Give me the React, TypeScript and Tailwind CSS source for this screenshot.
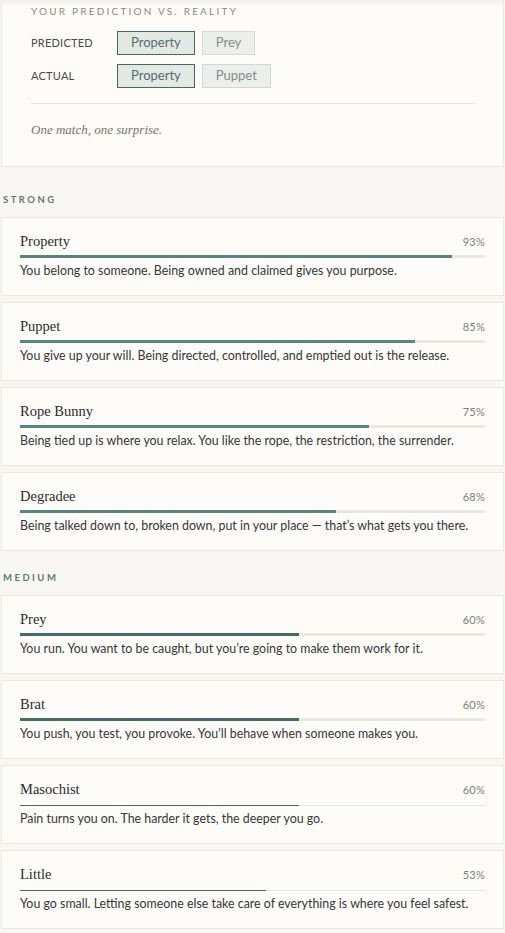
import React from 'react';

interface Result {
  name: string;
  pct: number;
  text: string;
}

const strong: Result[] = [
  { name: 'Property', pct: 93, text: 'You belong to someone. Being owned and claimed gives you purpose.' },
  { name: 'Puppet', pct: 85, text: 'You give up your will. Being directed, controlled, and emptied out is the release.' },
  { name: 'Rope Bunny', pct: 75, text: 'Being tied up is where you relax. You like the rope, the restriction, the surrender.' },
  { name: 'Degradee', pct: 68, text: 'Being talked down to, broken down, put in your place — that’s what gets you there.' },
];

const medium: Result[] = [
  { name: 'Prey', pct: 60, text: 'You run. You want to be caught, but you’re going to make them work for it.' },
  { name: 'Brat', pct: 60, text: 'You push, you test, you provoke. You’ll behave when someone makes you.' },
  { name: 'Masochist', pct: 60, text: 'Pain turns you on. The harder it gets, the deeper you go.' },
  { name: 'Little', pct: 53, text: 'You go small. Letting someone else take care of everything is where you feel safest.' },
];

const serif = { fontFamily: '"Liberation Serif", "DejaVu Serif", serif' };

function Chip({ label, match }: { label: string; match: boolean }) {
  return (
    <span
      className={`h-[24px] px-[13px] flex items-center text-[13px] border ${
        match
          ? 'bg-[#e3e8e5] border-[#456a66] text-[#4f706d]'
          : 'bg-[#eceeeb] border-[#d3dad6] text-[#7f8f8c]'
      }`}
    >
      {label}
    </span>
  );
}

function ResultCard({ r, tier }: { r: Result; tier: 'strong' | 'mid' | 'low' }) {
  const fill =
    tier === 'strong' ? 'bg-[#5a8581] h-[3px]' : tier === 'mid' ? 'bg-[#486a66] h-[3px]' : 'bg-[#476763] h-px';
  const track = tier === 'low' ? 'h-px bg-[#e8e4df]' : 'h-[3px] bg-[#ebe7e2]';
  return (
    <div className="bg-[#fdfcf9] border border-[#ebe7e1] px-[18px] pt-[14px] pb-[16px]">
      <div className="flex items-center justify-between h-[20px]">
        <span className="text-[14.5px] text-[#2b2b2b]" style={serif}>{r.name}</span>
        <span className="text-[11px] text-[#7a7f7e] tracking-[0.02em]">{r.pct}%</span>
      </div>
      <div className={`mt-[3px] h-[3px] flex ${tier === 'low' ? 'items-end' : 'items-start'}`}>
        <div className={`w-full relative ${track}`}>
          <div className={`absolute left-0 bottom-0 ${fill}`} style={{ width: `${r.pct}%` }} />
        </div>
      </div>
      <p className="mt-[5px] text-[12.4px] leading-[16px] text-[#363636] whitespace-nowrap">{r.text}</p>
    </div>
  );
}

export default function App() {
  return (
    <div
      className="min-h-screen bg-[#f8f6f2] px-px pb-[4px]"
      style={{ fontFamily: 'Lato, "Open Sans", sans-serif' }}
    >
      <div className="bg-[#fdfcf9] border-x border-b border-[#ebe7e1] px-[29px] pt-[4px] pb-[26px] shadow-[inset_0_7px_7px_-5px_rgba(0,0,0,0.07)]">
        <div className="text-[10px] leading-[14px] tracking-[0.22em] text-[#8d8782]">YOUR PREDICTION VS. REALITY</div>
        <div className="mt-[13px] flex flex-col gap-[9px]">
          <div className="flex items-center">
            <span className="w-[86px] text-[11px] tracking-[0.02em] text-[#4a4a4a]">PREDICTED</span>
            <div className="flex gap-[7px]">
              <Chip label="Property" match />
              <Chip label="Prey" match={false} />
            </div>
          </div>
          <div className="flex items-center">
            <span className="w-[86px] text-[11px] tracking-[0.02em] text-[#4a4a4a]">ACTUAL</span>
            <div className="flex gap-[7px]">
              <Chip label="Property" match />
              <Chip label="Puppet" match={false} />
            </div>
          </div>
        </div>
        <div className="mt-[15px] border-t border-[#e8e4de]" />
        <p className="mt-[16px] text-[13px] leading-[20px] italic text-[#7c706a]" style={serif}>
          One match, one surprise.
        </p>
      </div>

      <div className="mt-[26px] mb-[10px] pl-[2px] text-[9.5px] leading-[14px] font-bold tracking-[0.26em] text-[#627775]">STRONG</div>
      <div className="flex flex-col gap-[6px]">
        {strong.map(r => (
          <ResultCard key={r.name} r={r} tier="strong" />
        ))}
      </div>

      <div className="mt-[20px] mb-[10px] pl-[2px] text-[9.5px] leading-[14px] font-bold tracking-[0.26em] text-[#627775]">MEDIUM</div>
      <div className="flex flex-col gap-[6px]">
        {medium.map((r, i) => (
          <ResultCard key={r.name} r={r} tier={i < 2 ? 'mid' : 'low'} />
        ))}
      </div>
    </div>
  );
}
